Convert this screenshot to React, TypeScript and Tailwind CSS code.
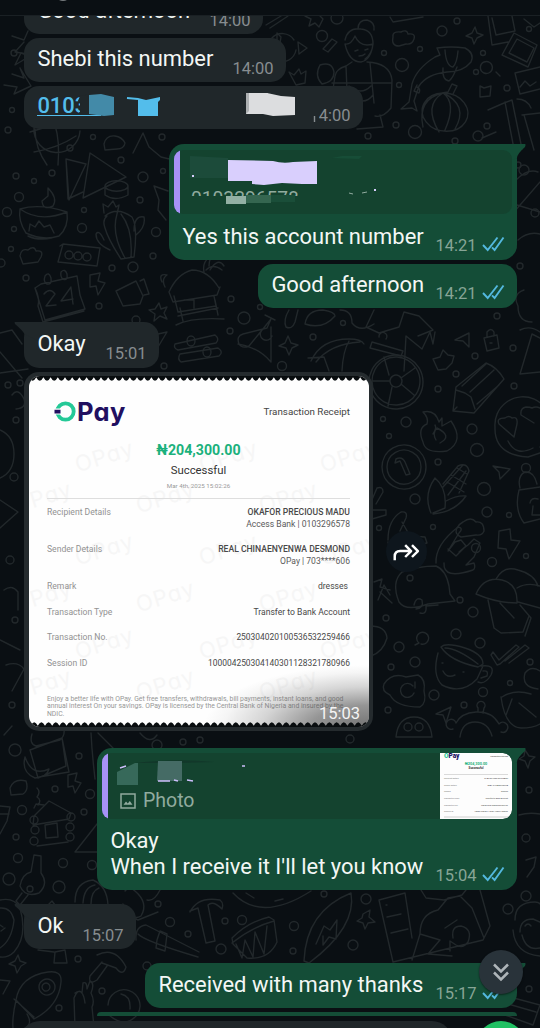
import React from "react";

const circles: [number, number, number][] = [
  [337, 18, 6], [457, 21, 3], [442, 31, 5], [384, 53, 2.5], [420, 49, 2.5], [402, 65, 6.5], [483, 53, 2.5],
  [476, 72, 2.5], [399, 85, 2.5], [507, 88, 3], [529, 29, 2.5], [396, 125, 3], [415, 132, 6.5], [478, 136, 5],
  [368, 136, 3], [487, 126, 3], [455, 141, 3], [322, 36, 5.5], [12, 110, 2.5], [14, 53, 3], [8, 130, 3],
  [93, 137, 2.5], [70, 148, 3], [121, 160, 3], [52, 173, 3], [16, 176, 3], [34, 181, 2.5], [19, 197, 4.5],
  [143, 177, 5], [162, 137, 3], [163, 171, 2.5], [140, 200, 3], [7, 212, 4.5], [84, 210, 2.5], [14, 229, 2.5],
  [82, 228, 4.5], [156, 232, 4.5], [11, 249, 2.5], [153, 256, 3], [112, 268, 3], [133, 267, 5], [26, 278, 3],
  [99, 306, 3], [1, 263, 4], [231, 299, 3], [230, 331, 3], [244, 318, 6], [260, 307, 2.5], [343, 323, 2.5],
  [313, 337, 3], [282, 366, 4.5], [164, 366, 3], [136, 320, 4], [497, 316, 3], [513, 348, 3], [475, 356, 3],
  [456, 374, 3], [438, 389, 3], [514, 386, 3], [383, 419, 2.5], [406, 422, 5], [389, 436, 2.5], [472, 429, 5],
  [477, 450, 6.5], [438, 462, 3], [526, 468, 4.5], [415, 499, 5], [484, 489, 6.5], [487, 512, 5], [509, 515, 2.5],
  [379, 528, 2.5], [433, 527, 2.5], [476, 548, 4.5], [492, 562, 4.5], [526, 556, 2.5], [410, 578, 3], [460, 600, 3],
  [473, 612, 5], [386, 618, 3], [456, 634, 5], [480, 643, 5], [399, 647, 5], [415, 662, 5], [391, 667, 3],
  [530, 662, 3], [434, 695, 5], [483, 692, 4.5], [510, 683, 2.5], [464, 705, 3], [388, 710, 3], [15, 750, 6],
  [79, 756, 3], [157, 745, 5], [183, 742, 3], [55, 789, 3], [90, 794, 4.5], [22, 810, 4.5], [84, 812, 3],
  [16, 837, 3], [18, 858, 4.5], [63, 863, 4.5], [9, 879, 6], [59, 887, 6], [92, 865, 4.5], [78, 959, 3],
  [102, 991, 3], [59, 1008, 3], [147, 966, 4], [158, 904, 3], [170, 922, 4.5], [188, 934, 3], [225, 921, 3],
  [242, 920, 4.5], [294, 926, 4.5], [221, 949, 5], [293, 951, 3], [353, 945, 5], [324, 894, 3], [366, 899, 5],
  [508, 909, 5], [526, 896, 5], [529, 989, 3], [518, 165, 3], [524, 170, 5], [535, 213, 4], [520, 266, 3],
  [8, 385, 3], [20, 383, 3], [16, 420, 3], [14, 477, 4], [10, 560, 4], [15, 620, 3], [12, 705, 3], [526, 838, 4],
  [529, 790, 3], [200, 740, 3], [350, 739, 4],
];

const strokes: string[] = [
  "M390 17l3 5 30-5", "M393 37q-1-6 8-5 6-3 7 2 8-1 6 5-2 6-8 5l-7 2q-8 0-6-9z", "M475 27l2 6 6 2-6 3-3 6-2-6-6-2 6-3z",
  "M488 16l4 29 16-3M492 18l4 17 19-4-3-15M514 33l23 12-9 22-26-12zM517 39l17 9-7 14-18-9zM524 19l10 8 6-4",
  "M437 48q14-2 28 0 10 5 6 14-8 10-24 10-20 2-28 14l-5 15 3 10-5-3-11 1 8-7 3-18q4-15 23-27l5-2zM445 50q1 16 8 17 4-4 5-16M443 68q-1 12 6 13 4-3 8-14M417 87q4 2 2 6l-5-2 3-6",
  "M443 93a23 19 10 1 0 1 0M443 93q-20 12-4 39M443 93q14 10 2 37M443 93q-26 6-20 34M443 93q26 12 12 36M442 93l6-1 4-8 5 2-4 8",
  "M484 62a6 6 0 1 1 0 11 6 6 0 0 1 0-11M496 72l4 4", "M480 86l4 2 7-2-1 10-10 1zM515 73l25-6M515 73l5 21 20-5M520 87l5-6 5 5 6-4",
  "M488 110l16-7 8-3 10 49M505 102l9 47M482 138l14-6M522 115l18-2M524 115l10 35M517 99q10 0 14 9",
  "M296 50a14 14 0 1 1-2-10M298 42l9 6-8 6z", "M266 25l15-9M270 28l18-12M305 16l6 3-2 7 6-3 4 4 4-8-3-3M323 49l9-10 5 3-9 10zM277 33l4 4-2 12-2 2z",
  "M345 40q3-13 16-11 12 1 12 15-1 10-8 15M345 44q4 18 16 18 10-2 12-18-13 4-18-8-4 9-10 8zM355 51l3-1M365 50l3-1M359 56q4 0 6-2M358 29q0-9 9-9 8 2 7 10M352 62l-6 4q-10 3-11 10l-3 20 5 22 20 3M367 62q23 1 25 18l-1 28q-8 10-16 8M346 66l2 50M370 63l4 40M332 83h60M349 86q12 10 22 0M349 95q15 12 24 0M380 115l3 12-26 2",
  "M320 65q12-4 14 7 0 10-12 12-8-8-2-19zM289 72l5 3 5-6 2 5 5-3-1 12-9 2z", "M21 53l9 3-15 9zM12 74l12 4-4-10 11 18-17 8 3-7-13-2", "M12 36l12 4 4-9M24 42l-9 10 12 2",
  "M34 128a23 23 0 1 0 46 3M30 132q20-6 46-14M34 152q24-4 42-16M35 129q0 19 12 36M55 125q5 16 3 40",
  "M66 159l20 5-17 36zM66 159l2 40 15-7M90 153l36 24-43 21z", "M105 186a11 5 0 1 0 23 0 11 5 0 1 0-23 0M105 186v9q10 7 23 0v-9",
  "M133 153l10-20 6 14 12 10q10 3 18 2M104 144q2-9 11-8 7 1 10 7-1 6-8 6l-12 1zM154 186l14 5M154 186l5 14-1 10 8 10",
  "M20 209q20-6 47 3 2 15-8 24-16 5-33-3-8-12-6-24zM20 209q20 14 47 3M29 231l1-7 5 3 4-6 5 6 6-2 4 8M48 188q10 10 5 18-10 5-11-5l6-5zM28 236q10 5 24 2",
  "M105 216q12-10 27 1 6 10 2 40l-13 2q-13-20-16-31-3-8 2-12zM117 214q-6 20 8 44M121 214q12 15 10 43M104 213l-1-9 5 3 5-6 3 6 3-2-2 9M104 240q-5-11-8-6 0 10 14 16M134 231q0-16 10-14 2 10-8 18",
  "M63 244l37 4-3 18-39-4zM60 246l3-2M97 266l3-18M65 255a4 4 0 1 0 8 0 4 4 0 1 0-8 0M74 256a4 4 0 1 0 8 0 4 4 0 1 0-8 0M83 257a4 4 0 1 0 8 0 4 4 0 1 0-8 0",
  "M20 256q1-8 8-6 6-5 8 1 8-1 5 6l-3 5-15 2z", "M35 288l6-4 36-8 3 19 5 14-40 11zM35 288q5 10 3 18l5 16 41-11M45 276q4-5 6 2 1 7-4 6-4-2-2-8M61 272q4-4 6 2 1 7-4 5-3-2-2-7M44 294q6-7 11 0l-9 12 10-1M71 287l-10 14 12-2M71 288l2 16",
  "M90 275l10-2-2 8 7 2-7 12-2-9-6 1zM116 291l20-10 7 15-3 8-17 2zM140 281l4-2 5 15-5 1M159 303l2 6 6-2-3 6 3 6-7-3-6 5 1-7-6-4 6-1z",
  "M169 292q8-18 23-22 16 0 27 18M169 292l4 10 44-7 3-8M174 296l4 16 38-6-2-10M178 316l40-8M180 308l3 13M215 300l3 15M184 300h10v8M176 325q16-8 48-6M165 287q-4-8 2-12-9-2-5 7M204 272q-2-10 6-15M210 270q8-13 14-4M209 266q0-10 8-13M222 270q-9-7-16 0",
  "M175 344l40-9q5 4 1 8l-38 7q-5-2-3-6zM180 354l38-6q6 4 1 8l-38 6q-4-3-1-8M187 341a4 5 0 1 0 8 0 4 5 0 1 0-8 0M203 352a4 5 0 1 0 8 0 4 5 0 1 0-8 0M158 334l9-2-9 15",
  "M271 319l-22 27q-7 3-10-2-3-8 4-10l24-6zM265 315l10 5M262 330a6 6 0 1 0 10 6M238 344q20 3 33 18V327M288 336l3 7 7 2-6 3-3 7-3-7-7-2 6-3z",
  "M289 310q-6 10-3 17 6 3 9-5l3-12M305 324q2-14 18-14 12 2 12 6-12 14-30 8M340 310q12 0 12 13 8 10 22 1M374 310l-8 17 13 6 20-6 5-15 15 4 14 14-15 6",
  "M311 361q10-22 38-22 12 0 15 5M316 362q14-18 44-20M308 358l16-1 5 14M349 341q-6 10-7 30M404 371l2-35 16 13 8-17 3 12 2-12M372 342l31 9-2 5-31-8zM379 337a4 4 0 1 1 7 2",
  "M369 382a27 27 0 1 1 0 .1M372 381a24 24 0 1 1 0 .1M390 381a6 6 0 1 1 0 .1M389 375l-5-18M401 378l14-10M401 384l13 11M392 387l-4 19M390 381h-17",
  "M455 340l14-7v14l-6-6zM484 338l13-3 2 13-12 3zM487 337v-5q4-5 7 0v4M490 343h2M433 359l7-2 3-7 5 5 6 1-2 7-6 6-8 1z",
  "M453 411l3-24 30-24q11 4 18 16l-30 34zM456 390l9 3 6 4 4 12M462 386l24-22M470 392l24-22M477 404l22-19M454 410l3-3",
  "M423 442q-6-14 4-18 2-6-4-12 12-3 16 10l3-4 0 8 9-5q14 20-4 30-22 3-24-9zM436 440q-4-7 1-12 16 8 3 15M433 434q4-6 2-9",
  "M495 427a28 28 0 1 1 45 20M495 427q-1 28 33 30l12-4M514 437l-15-13q-3-6 6-6 4-3 7 0 6-2 5 6zM534 423l-13-8q-1-7 5-8 4 0 6 1 4-2 8 0M508 441q8 16 25 7",
  "M382 467a22 22 0 1 1 0 .1M387 467a17 17 0 1 1 0 .1M396 459q6-3 9 3l5 12-4 1-6-14-5 2z",
  "M431 513q-8-18 4-35 12 10 10 30l-12 5M433 514q22-2 33-18-9-1-20 5M443 484l15-18q9-4 11 5l-10 22M447 482l17 10M451 475l15 9M457 468l10 6M448 495l18-24M443 487l20-22",
  "M493 466l17 3-10 10-1-7zM520 488q-3-12 5-16 9-1 12 12M519 490l21-3M519 490q-5 20 5 33l16-4M530 503q1-6 8-4M533 506l-1 9h8",
  "M388 540q0-20 13-28 7-1 5 6l-6 13M402 522l8 14 15 1 2 6-9 2M388 542q4 24 20 24l17-8-1-9M371 502l6-14q6-2 6 4l-7 12M371 510h15v5l-14 4",
  "M457 528q2-4 6-6 8-6 13 0 8-1 8 9-2 5-8 4l-15 2q-7-3-4-9zM499 531l11-2 1 11 9 1-11 18-3-10-8-1z",
  "M436 563q-1-18 22-36 6 1 1 6l-11 18 7-9 6-2 5 6-7 6M448 549l8 7 8-8 4-3 6-6 6 4-6 14-8 8 8-2q2 5-1 7-30 10-29-7",
  "M399 602q-8-20 3-30 16-6 34-6 10 4 13 20l1 8 5 7-27 3q-22 8-29-2M414 605q2-9 8-5 2 8-6 9M420 613q7 2 6-7l12-1M374 582l8-3-2 8 10 3M378 600l6-15 6 10M380 592l12 11",
  "M476 594q8-18 26-14 16 4 15 23-20 0-41-9zM496 579q8-14 22-9 16 4 20 16M517 588q10-6 23-2M518 602l22 6M488 600l6 28 7 5 22-1 6-16M500 603l14 15M520 605l11 13-6 18",
  "M493 652l6 8 17-15 3 2-19 17-3 1-6-10zM505 661l20-16 4 3-20 15M415 645l4-2a6 6 0 1 1 2 1",
  "M441 647q5-5 24 1 18 6 18 16l-5 3q-28-6-37-20zM445 648q12 0 33 16M438 653q-6 22 4 32 20 10 35-6l6-13M481 666q15-2 10 9-6 10-13 7M483 671q6-1 4 5l-6 2M443 671q4 8 12 4M463 672h1M442 663h1",
  "M384 684q8-12 22-7l12-2q8 4 6 16 3 12-4 16-24 0-30-12-9-4-6-11zM413 686a7 7 0 1 0 1 7M415 682v6M370 626q16 0 17 12-4 14-16 18",
  "M436 714l15-7-5 16-3-8zM396 737q2-20 18-20 16 0 18 20zM404 727a4 4 0 1 0 8 0 4 4 0 1 0-8 0M415 727a4 4 0 1 0 8 0 4 4 0 1 0-8 0",
  "M453 729a5 5 0 1 1 3-6q5-10 20-11 16-1 23 12a5 5 0 1 1 2 8M460 737q2-15 15-15 13 0 17 14M478 712v-4a4 4 0 1 1 6 0l-1 5M502 697q12-8 29-3M501 697q4 30 20 31 12 0 19-4M512 699l-6 16M519 703l17 14M540 671q-9-6-15 2-4 14 13 16",
  "M30 750l32-12 4 28-28 12zM32 734q-3 10 4 12l24-6q5-4 4-11M62 738l7 34-30 5M25 757q7 20 24 12-2 8-14 9-14-6-10-21M91 733q1 20 4 46M98 733l20 20M140 733q10 12 17 2",
  "M68 775l9-2-2 8 6 2-6 10-2-7-5 1zM10 788q4-10 16-7 3 9-3 13l-12 1zM0 806l10 1-3 14-7 13M0 814h9M37 788q4 4 0 9 5 3 1 8M34 808l2-4 8 1",
  "M34 816l15-15 22 12-2 6-36 6zM30 820a4 4 0 1 0 8 0 4 4 0 1 0-8 0M67 817a4 4 0 1 0 8 0 4 4 0 1 0-8 0M31 830a4 4 0 1 0 8 0 4 4 0 1 0-8 0M66 827a4 4 0 1 0 8 0 4 4 0 1 0-8 0M30 841a4 4 0 1 0 8 0 4 4 0 1 0-8 0M66 837a4 4 0 1 0 8 0 4 4 0 1 0-8 0M45 825l12-2 1 14-12 1zM37 846l31-4",
  "M97 824l-22 28h22M34 855l7 1 0 17q8 11-2 20-14 5-19-7 2-12 11-14zM22 893l-6 8 4 4 8-10M27 889a3 3 0 1 0 6 0 3 3 0 1 0-6 0M0 900q14-3 20 8 8 28-6 44-6 6-14 5M0 908q11-1 14 12-2 20-14 28M0 925l3 2M1 931l4-3",
  "M75 902q0-20 18-22 14 6 15 25M83 903q1-16 12-18M91 904q0-13 8-16M125 891q4-6 10 0 14 12 6 25-10 6-18-12M48 905l4-4 3 4M128 915l10 5 20-8M136 940q-1-14 10-15l53 27M138 934q6 7 60 23",
  "M157 940l3-9 7 3-2 17-9-3zM38 950l16 2M55 952l10-2 2 13-13 0zM18 955l2 6 6 2-5 3-4 7-2-7-6-2 6-3z",
  "M97 955q18-9 29 12-3 10-10 1l-14-5M102 962l-12 14q-2 10 7 4l10-14M0 980l10 1-7 13",
  "M16 1000q4-24 32-28 14-2 13 10-2 24-27 37zM39 987a8 8 0 1 1 0 .1M42 987a4 4 0 1 1 0 .1M14 999l20 18M16 1000q-4 18-3 28M27 1014q6 10-2 14",
  "M75 1028l-1-30q4-10 8-5l1-10q4-2 4 6l3-8q5 2 1 12 4 8 1 14l2 20M75 993q8-6 10 10M108 1005a16 16 0 1 1 29 10q-12 14-28 0M121 994q10 2 9 15",
  "M190 912q8-16 30-12 4 3 2 9-9-9-14-4l7 36-9 2-8-35-8 3zM233 893q28 30 78-2M246 893l8 5M283 899l-8 2",
  "M232 938q16-16 37-21l5 3 3 22q-8 18-30 16l-14-14zM232 943q20-16 42-22M236 944l6 14 3-18 8 17 2-25 9 22 3-28",
  "M304 961q2-50 47-68 6 34-42 70zM316 944l8-18 6 4 7-10-1 19-7-2-6 8 0-9M363 914l7-4-1 7 6 5-7 1-3 6-2-6-6-2 5-3z",
  "M379 900l26-7 7 45M379 900l14 62 90-22 7-14-10-36M386 905h1M387 917l14-3M391 933l17-4M412 960l8-26q0-20 18-24l10-12 12-2 12 12 12 30M445 928l12-8M453 938q-2-12 8-12 12 3 7 16-5 7-12 3l-6-4v10M420 934l20 6-12 14 24 2M421 890l5 8 18 2 18-5 4-5",
  "M515 920q0-18 20-18 4 0 5 2M513 930q2 24 27 26M520 932q0-13 13-13l7 3M522 935q4 16 18 13M525 926q3-4 6 0M510 997l30 8-7 20-28-10M508 1004l28 8",
  "M500 246l12-30 4 32M516 180q12-12 22-8M514 212l26-30M517 205l23 7M518 240q10-9 22-6M524 290q-12 4-6 16 0 16 14 16M520 330q10-5 20 2M520 374l12-40 8 4M520 374l20-2",
  "M0 333l12-3 10 14M0 352l22 26M0 373l28-4M12 395q6-8 12 4 3 9-8 10M0 430q14 6 14 24t-14 24M0 500l18 12-18 16M4 590q8-6 14 2v18M0 640l20 10M6 665q12-4 18 4l-12 22M4 735l8-9",
  "M525 750l4 6 6 1-5 4-2 7-3-7-6-2 5-3zM519 815q10-3 21-1M526 860l10-3-2 10-7 10M160 890q-6 12-13 10",
];

function Wallpaper() {
  return (
    <svg className="absolute inset-0" width="540" height="1028" viewBox="0 0 540 1028" fill="none" stroke="#22282b" strokeWidth="1.4" strokeLinejoin="round" strokeLinecap="round">
      {circles.map(([x, y, r], i) => <circle key={i} cx={x} cy={y} r={r} />)}
      {strokes.map((d, i) => <path key={i} d={d} />)}
    </svg>
  );
}

function Ticks() {
  return (
    <svg width="23" height="16" viewBox="0 0 23 16" fill="none" stroke="#53b8de" strokeWidth="1.9" className="mb-[8px] ml-[5px] shrink-0">
      <path d="M1 9l4.7 5L15.500 1.500M10 11.300l2.600 2.700L21.500 1.500" />
    </svg>
  );
}

function Meta({ time, sent = false }: { time: string; sent?: boolean }) {
  return (
    <span className="flex items-end">
      <span className={"text-[16.5px] leading-[20px] " + (sent ? "pb-[4px] text-[#87a596]" : "pb-[3px] text-[#878d90]")}>{time}</span>
      {sent && <Ticks />}
    </span>
  );
}

function Tail({ side }: { side: "left" | "right" }) {
  return side === "left" ? (
    <svg className="absolute top-0 -left-[10px]" width="26" height="20" viewBox="0 0 26 20"><path d="M1 0h25v20L10.500 12Q9 9 1 2Q0 0 1 0z" fill="#20272a" /></svg>
  ) : (
    <svg className="absolute top-0 -right-[9px]" width="26" height="20" viewBox="0 0 26 20"><path d="M25 0H0v20L17 14q0-4 8-11q1-3 0-3z" fill="#144d37" /></svg>
  );
}

function Bubble({ className, tail, children }: { className: string; tail?: "left" | "right"; children?: React.ReactNode }) {
  return (
    <div className={"relative shrink-0 rounded-[15px] " + className}>
      {tail && <Tail side={tail} />}
      <div className="relative flex h-full flex-col justify-end">{children}</div>
    </div>
  );
}

function Line({ text, time, sent }: { text: React.ReactNode; time: string; sent?: boolean }) {
  return (
    <div className="flex items-end justify-between pr-[12.500px] pl-[13.400px]">
      <span className="pb-[10px] text-[21.950px] leading-[26px] text-[#f3f7f5]">{text}</span>
      <Meta time={time} sent={sent} />
    </div>
  );
}

function OPayLogo() {
  return (
    <div className="flex items-center">
      <svg width="23" height="22" viewBox="0 0 23 22" fill="none">
        <circle cx="11.500" cy="10.500" r="8.200" stroke="#25c997" strokeWidth="3.800" />
        <path d="M0 7.500h7v6H0z" fill="#fff" />
        <path d="M.5 8.700h6v3.800h-6z" fill="#210f60" />
      </svg>
      <span className="font-['Inter'] text-[25.500px] leading-[26px] font-bold tracking-[0.3px] text-[#210f60] [font-feature-settings:'cv11']">Pay</span>
    </div>
  );
}

const marks: [number, number][] = [
  [45, 80], [169, 80], [290, 80],
  [-17, 121], [106, 121], [229, 121],
  [45, 173], [169, 173], [290, 173],
  [-17, 220], [106, 220], [229, 220],
  [45, 267], [169, 267], [290, 267],
  [-17, 308], [106, 308], [229, 308],
];

function scallop(y: number, dir: number) {
  let d = `M0 ${y}`;
  for (let x = 0; x < 340; x += 7.2) d += `q3.6 ${7 * dir} 7.2 0`;
  return d;
}

function Scallops({ flip }: { flip?: boolean }) {
  return (
    <svg width="340" height="5" viewBox="0 0 340 5" className={"relative shrink-0 " + (flip ? "rotate-180" : "")}>
      <path d={scallop(1.2, 1) + "V0H0z"} fill="#090d0f" />
    </svg>
  );
}

function Row({ label, value, sub, digits, className }: { label: string; value: string; sub?: string; digits?: boolean; className: string }) {
  return (
    <div className={"flex shrink-0 justify-between leading-[12px] " + className}>
      <span className="text-[8.600px] text-[#929292]">{label}</span>
      <span className={"text-right text-[#484848] " + (digits ? "text-[8.430px]" : "text-[8.580px]")}>
        <span className={sub ? "block text-[8.600px] font-medium" : "block"}>{value}</span>
        {sub && <span className="block text-[#5a5a5a]">{sub}</span>}
      </span>
    </div>
  );
}

function Receipt() {
  return (
    <Bubble className="mt-[4px] h-[359px] w-[349px] self-start bg-[#252b2e] p-[4px_4px_4px_5px]">
      <div className="relative flex h-[351px] w-[340px] flex-col overflow-hidden rounded-[11px] bg-[#fefefe]">
        {marks.map(([x, y], i) => (
          <span key={i} className="absolute w-[60px] -translate-y-1/2 -rotate-[17deg] font-['Inter'] text-[22px] leading-none tracking-[1px] text-[#f6f6f6] [font-feature-settings:'cv11']" style={{ left: x, top: y }}>OPay</span>
        ))}
        <Scallops />
        <div className="relative flex h-[341px] flex-col pr-[19px] pl-[18px]">
          <div className="mt-[18px] flex h-[26px] items-center justify-between pl-[7px]">
            <OPayLogo />
            <span className="text-[9.800px] text-[#444]">Transaction Receipt</span>
          </div>
          <div className="mt-[16px] text-center text-[14.200px] leading-[18px] font-bold text-[#1bb17c]">₦204,300.00</div>
          <div className="mt-[4px] text-center text-[11.350px] leading-[14px] text-[#333]">Successful</div>
          <div className="mt-[5px] text-center text-[6.200px] leading-[8px] text-[#999]">Mar 4th, 2025 15:02:26</div>
          <div className="mt-[8px] h-px shrink-0 bg-[#dedede]" />
          <Row className="mt-[7px]" label="Recipient Details" value="OKAFOR PRECIOUS MADU" sub="Access Bank | 0103296578" />
          <Row className="mt-[13px]" label="Sender Details" value="REAL CHINAENYENWA DESMOND" sub="OPay | 703****606" />
          <Row className="mt-[13px] pr-[2px]" label="Remark" value="dresses" />
          <Row className="mt-[13.500px]" label="Transaction Type" value="Transfer to Bank Account" />
          <Row digits className="mt-[13.500px]" label="Transaction No." value="250304020100536532259466" />
          <Row digits className="mt-[13.500px]" label="Session ID" value="100004250304140301128321780966" />
          <p className="mt-[27px] text-[6.820px] leading-[7.800px] whitespace-nowrap text-[#979797]">
            Enjoy a better life with OPay. Get free transfers, withdrawals, bill payments, instant loans, and good<br />
            annual interest On your savings. OPay is licensed by the Central Bank of Nigeria and insured by the<br />NDIC.
          </p>
        </div>
        <div className="absolute right-0 bottom-0 h-[70px] w-[170px] bg-[radial-gradient(ellipse_165px_62px_at_100%_100%,rgba(50,50,50,0.68)_0%,rgba(60,60,60,0.54)_35%,rgba(90,90,90,0.25)_65%,rgba(140,140,140,0.08)_88%,transparent_100%)]" />
        <Scallops flip />
        <span className="absolute right-[9px] bottom-[3px] text-[16.500px] leading-[20px] text-[#f4f4f4]">15:03</span>
      </div>
    </Bubble>
  );
}

function AccountReply() {
  return (
    <div className="mx-[5px] mb-[10px] flex h-[64px] overflow-hidden rounded-[9px] bg-[#14432f]">
      <span className="w-[6px] bg-[#a792f7]" />
      <div className="relative flex-1">
        <svg className="absolute inset-0" width="330" height="64" viewBox="0 0 330 64">
          <path d="M10 6l38 2v20H10z" fill="#1c4b3a" />
          <path d="M48 10l45 1q10 3 20 1l24-1v23l-15 0-20-1-18 2-12-1v-3H48z" fill="#d9cffd" />
          <path d="M152 8l10-2h20l-3 3z" fill="#174d37" />
          <path d="M12 25h2v2h-2zM194 39h2v2h-2z" fill="#d9cffd" />
        </svg>
        <div className="absolute top-[37px] left-[11px] h-[9px] overflow-hidden text-[19.200px] leading-[26px] text-[#91ab9f]"><span className="relative -top-[2px]">0103296578</span></div>
        <svg className="absolute inset-0" width="330" height="64" viewBox="0 0 330 64">
          <path d="M46 46h20v8H46z" fill="#93b0a4" /><path d="M66 45h25v8H66z" fill="#356650" /><path d="M91 45h24v7H91z" fill="#1a4e39" />
          <path d="M169 43l4 1M182 43l5-1" stroke="#91ab9f" />
        </svg>
      </div>
    </div>
  );
}

function PhotoReply() {
  return (
    <div className="mx-[5px] mb-[9px] flex h-[66px] overflow-hidden rounded-[9px] bg-[#14432f]">
      <span className="w-[6px] bg-[#a792f7]" />
      <div className="relative flex flex-1 items-end pb-[6px] pl-[12px]">
        <svg className="absolute top-0 left-0" width="240" height="36" viewBox="0 0 240 36">
          <path d="M27 10Q70 5 106 9L70 10z" fill="#12382a" />
          <path d="M9 19l18-9h3v22H9z" fill="#37695a" /><path d="M50 8h24v20H49z" fill="#456b65" />
          <path d="M12 15l6-2M50 28h12M66 27l4 1M79 27l6 1M134 13h3" stroke="#cdbffb" strokeWidth="1.5" />
        </svg>
        <svg width="16" height="16" viewBox="0 0 16 16" fill="none" stroke="#91ab9f" strokeWidth="1.5" className="mb-[4px]">
          <path d="M1 1h14v14H1z" /><path d="M3.500 11.800l2.500-3.300 1.800 2 2-2.500 2.700 3.800z" fill="#91ab9f" stroke="none" />
        </svg>
        <span className="ml-[7px] text-[19.500px] leading-[24px] text-[#91ab9f]">Photo</span>
      </div>
      <div className="flex h-[66px] w-[72px] flex-col rounded-r-[9px] bg-[#fdfdfd] px-[4px]">
        <div className="flex justify-between leading-[7px]">
          <span className="text-[6.500px] font-black text-[#210f60]"><span className="text-[#25c997]">O</span>Pay</span>
          <span className="text-[2px] leading-[7px] text-[#333]">Transaction Receipt</span>
        </div>
        <span className="mt-[2px] text-center text-[3.800px] leading-[4px] font-bold text-[#1bb17c]">₦204,300.00</span>
        <span className="text-center text-[3px] leading-[5px] font-bold text-[#333]">Successful</span>
        <span className="mt-[3px] h-px bg-[#dadada]" />
        {["Recipient Details", "Sender Details", "Remark", "Transaction Type", "Transaction No.", "Session ID"].map((t, i) => (
          <span key={t} className="mt-[2px] flex h-[4.700px] justify-between text-[2px] leading-[3px] text-[#777]">
            <span>{t}</span>
            <span className="text-[#444]">{["OKAFOR PRECIOUS MADU", "REAL CHINAENYENWA", "dresses", "Transfer to Bank Account", "250304020100536532259466", "100004250304140301128321780966"][i]}</span>
          </span>
        ))}
        <span className="mt-[1px] h-[2px] bg-[#e6e6e6]" />
      </div>
    </div>
  );
}

export default function App() {
  return (
    <div className="relative flex h-[1028px] w-[540px] flex-col overflow-hidden bg-[#0a0f13] font-['Roboto',sans-serif]">
      <Wallpaper />
      <header className="relative z-10 h-[16px] shrink-0 overflow-hidden border-b border-[#1a2024] bg-[#0a0f13]">
        <div className="-mt-[15px] ml-[55px] h-[16px] w-[16px] rounded-full bg-[#777c7e]" />
      </header>
      <main className="relative flex flex-1 flex-col overflow-hidden pr-[23px] pl-[24px]">
        <Bubble className="-mt-[26px] h-[44px] w-[239px] shrink-0 self-start bg-[#20272a]"><Line text="Good afternoon" time="14:00" /></Bubble>
        <Bubble className="mt-[4px] h-[44px] w-[262px] self-start bg-[#20272a]"><Line text="Shebi this number" time="14:00" /></Bubble>
        <Bubble className="mt-[4px] h-[43px] w-[339px] self-start bg-[#20272a]">
          <Line text={<span className="block w-[43px] overflow-hidden font-medium text-[#53bdeb]">0103</span>} time="14:00" />
          <svg className="absolute top-0 left-0" width="339" height="43" viewBox="0 0 339 43">
            <path d="M56 10l-2 5 4 3-4 3 3 4-4 3h14V8z" fill="#20272a" />
            <path d="M13 29.500h64" stroke="#53bdeb" />
            <path d="M65 9l12-1 13 3v18l-10 1-15-2z" fill="#438aa8" />
            <path d="M103 12l11 1" stroke="#53bdeb" strokeWidth="2" />
            <path d="M114 12l8 2 14-3v3l-2 2v14h-20z" fill="#53bdeb" />
            <path d="M222 7h22v21h-22z" fill="#adb0b2" /><path d="M225 7l18 0 14 3 14 1v18l-22 1-10-2h-17l3-3z" fill="#dcdddf" />
            <path d="M286 20h9v16h-6v-8h-3z" fill="#20272a" />
            <path d="M290.500 30v6" stroke="#878d90" strokeWidth="1.400" />
          </svg>
        </Bubble>
        <Bubble tail="right" className="mt-[15px] h-[116px] w-[348px] self-end bg-[#144d37]">
          <AccountReply />
          <Line text="Yes this account number" time="14:21" sent />
        </Bubble>
        <Bubble className="mt-[4px] h-[44px] w-[259px] self-end bg-[#144d37]"><Line text="Good afternoon" time="14:21" sent /></Bubble>
        <Bubble tail="left" className="mt-[14px] h-[46px] w-[135px] self-start bg-[#20272a] pb-[1px]"><Line text="Okay" time="15:01" /></Bubble>
        <Receipt />
        <Bubble tail="right" className="mt-[17px] h-[142px] w-[420px] self-end bg-[#144d37]">
          <PhotoReply />
          <Line text={<>Okay<br />When I receive it I'll let you know</>} time="15:04" sent />
        </Bubble>
        <Bubble tail="left" className="mt-[14px] h-[45px] w-[112px] self-start bg-[#20272a]"><Line text="Ok" time="15:07" /></Bubble>
        <Bubble tail="right" className="mt-[14px] h-[45px] w-[372px] self-end bg-[#144d37]"><Line text="Received with many thanks" time="15:17" sent /></Bubble>
        <div className="mt-[4px] h-[4px] w-[420px] shrink-0 self-end rounded-t-[14px] bg-[#144d37]" />
      </main>
      <button aria-label="Forward" className="absolute top-[531px] left-[386px] flex size-[41px] items-center justify-center rounded-full bg-[#0e161d]">
        <svg width="28" height="20" viewBox="0 0 30 22" fill="none" stroke="#fff" strokeWidth="2.700" strokeLinejoin="round">
          <path d="M1.500 20v-4q0-6 6-6H20M13 3.500l6.500 6.500L13 16.500M20.500 3.500L27 10l-6.500 6.500" />
        </svg>
      </button>
      <button aria-label="Scroll to bottom" className="absolute top-[950px] left-[479px] flex size-[44px] items-center justify-center rounded-full bg-[#29333a] shadow-[0_1px_2px_rgba(0,0,0,0.5)]">
        <svg width="18" height="20" viewBox="0 0 18 20" fill="none" stroke="#aeb5b9" strokeWidth="2.500"><path d="M2 2.500l7 7 7-7M2 10.500l7 7 7-7" /></svg>
      </button>
      <div className="absolute top-[1021px] left-[20px] h-[40px] w-[432px] rounded-[20px] bg-[#20272a]" />
      <div className="absolute top-[1021px] left-[476px] size-[50px] rounded-full bg-[#21c063]" />
    </div>
  );
}
